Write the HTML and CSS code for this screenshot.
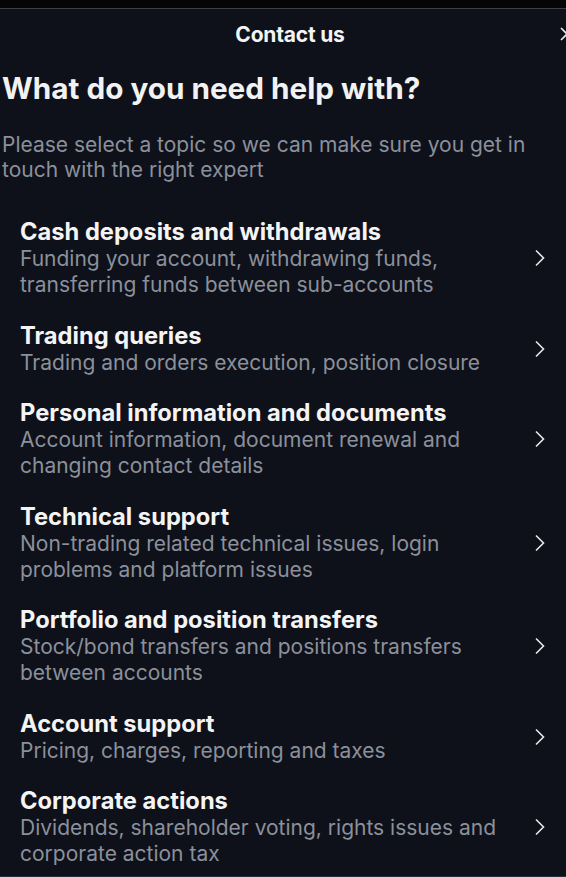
FILE: index.html
```html
<!DOCTYPE html>
<html lang="en">
<head>
<meta charset="utf-8">
<title>Contact us</title>
<link rel="stylesheet" href="styles.css">
</head>
<body>
<div class="panel">
  <header class="header">
    <span></span>
    <h1 class="header-title">Contact us</h1>
    <button class="close" aria-label="Close">
      <svg width="14" height="14" viewBox="0 0 14 14"><path d="M1 1L13 13M13 1L1 13" stroke="#e8e9ec" stroke-width="1.6" fill="none"/></svg>
    </button>
  </header>
  <main class="content">
    <h2 class="question">What do you need help with?</h2>
    <p class="intro">Please select a topic so we can make sure you get in touch with the right expert</p>
    <ul class="topics">
      <li class="topic"><div class="topic-text"><div class="topic-title">Cash deposits and withdrawals</div><div class="topic-desc">Funding your account, withdrawing funds, transferring funds between sub-accounts</div></div><svg class="chev" width="10" height="18" viewBox="0 0 10 18"><path d="M1 1.5L8.5 9L1 16.5" stroke="#e8e9ec" stroke-width="1.6" fill="none"/></svg></li>
      <li class="topic"><div class="topic-text"><div class="topic-title">Trading queries</div><div class="topic-desc">Trading and orders execution, position closure</div></div><svg class="chev" width="10" height="18" viewBox="0 0 10 18"><path d="M1 1.5L8.5 9L1 16.5" stroke="#e8e9ec" stroke-width="1.6" fill="none"/></svg></li>
      <li class="topic"><div class="topic-text"><div class="topic-title">Personal information and documents</div><div class="topic-desc">Account information, document renewal and changing contact details</div></div><svg class="chev" width="10" height="18" viewBox="0 0 10 18"><path d="M1 1.5L8.5 9L1 16.5" stroke="#e8e9ec" stroke-width="1.6" fill="none"/></svg></li>
      <li class="topic"><div class="topic-text"><div class="topic-title">Technical support</div><div class="topic-desc">Non-trading related technical issues, login problems and platform issues</div></div><svg class="chev" width="10" height="18" viewBox="0 0 10 18"><path d="M1 1.5L8.5 9L1 16.5" stroke="#e8e9ec" stroke-width="1.6" fill="none"/></svg></li>
      <li class="topic"><div class="topic-text"><div class="topic-title">Portfolio and position transfers</div><div class="topic-desc">Stock/bond transfers and positions transfers between accounts</div></div><svg class="chev" width="10" height="18" viewBox="0 0 10 18"><path d="M1 1.5L8.5 9L1 16.5" stroke="#e8e9ec" stroke-width="1.6" fill="none"/></svg></li>
      <li class="topic"><div class="topic-text"><div class="topic-title">Account support</div><div class="topic-desc">Pricing, charges, reporting and taxes</div></div><svg class="chev" width="10" height="18" viewBox="0 0 10 18"><path d="M1 1.5L8.5 9L1 16.5" stroke="#e8e9ec" stroke-width="1.6" fill="none"/></svg></li>
      <li class="topic"><div class="topic-text"><div class="topic-title">Corporate actions</div><div class="topic-desc">Dividends, shareholder voting, rights issues and corporate action tax</div></div><svg class="chev" width="10" height="18" viewBox="0 0 10 18"><path d="M1 1.5L8.5 9L1 16.5" stroke="#e8e9ec" stroke-width="1.6" fill="none"/></svg></li>
    </ul>
  </main>
</div>
</body>
</html>
```
FILE: styles.css
```css
html, body {
  margin: 0;
  padding: 0;
  background: #050506;
  overflow: hidden;
}
body {
  font-family: Inter, "Noto Sans", sans-serif;
  color: #f4f4f5;
}
.panel {
  margin-top: 8px;
  border-top: 1px solid #3a404b;
  border-bottom: 1px solid #2a303b;
  background: #0e1119;
  height: 869px;
  width: 566px;
  box-sizing: border-box;
  overflow: hidden;
}
.header {
  width: 580px;
  height: 50px;
  display: grid;
  grid-template-columns: 1fr auto 1fr;
  align-items: center;
}
.header-title {
  margin: 0;
  font-size: 21px;
  font-weight: 700;
  letter-spacing: -0.2px;
}
.close {
  justify-self: end;
  background: none;
  border: 0;
  padding: 0 6px 0 0;
  display: flex;
}
.content {
  padding: 0 0 0 2px;
}
.question {
  margin: 13px 0 0;
  font-size: 29.7px;
  font-weight: 700;
  line-height: 32px;
  color: #f2f2f3;
}
.intro {
  margin: 28px 0 0;
  font-size: 21px;
  line-height: 25px;
  color: #8b909b;
  padding-right: 30px;
}
.topics {
  list-style: none;
  margin: 36px 0 0;
  padding: 0 0 0 18px;
}
.topic {
  display: flex;
  align-items: center;
  gap: 20px;
  padding-right: 21px;
  margin-bottom: 23.5px;
}
.topic-text {
  flex: 1;
}
.topic-title {
  font-size: 23.7px;
  font-weight: 700;
  line-height: 28px;
}
.topic-desc {
  font-size: 21px;
  line-height: 26px;
  color: #8b909b;
}
.chev {
  flex: none;
}
```
